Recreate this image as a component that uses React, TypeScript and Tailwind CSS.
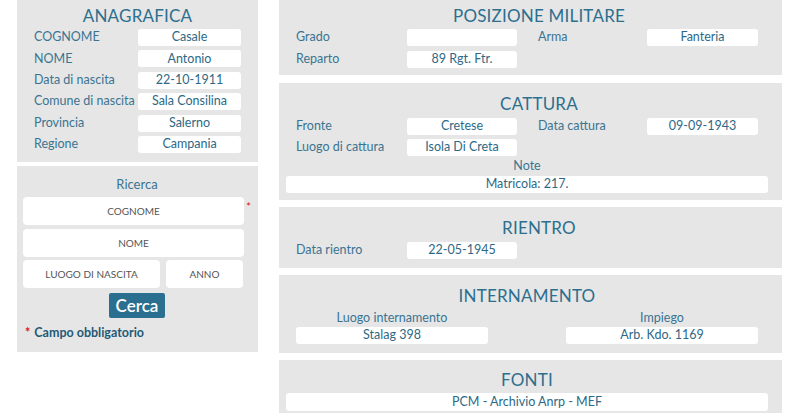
import type { ReactNode } from "react";

const font = { fontFamily: "Lato, 'Open Sans', sans-serif" };

function Title({ children, className = "" }: { children: ReactNode; className?: string }) {
  return (
    <div className={`flex items-center justify-center pt-[1px] text-[17px] leading-none tracking-[0.2px] text-[#2d6f8e] ${className}`}>
      {children}
    </div>
  );
}

function Box({ children, className = "" }: { children?: ReactNode; className?: string }) {
  return (
    <div className={`flex h-[17px] items-center justify-center rounded-[3px] bg-white text-[12.5px] leading-none text-[#2d6986] ${className}`}>
      {children}
    </div>
  );
}

function LeftRow({ label, value }: { label: string; value: string }) {
  return (
    <div className="flex h-[17px] items-center">
      <span className="w-[104px] text-[12.5px] leading-none text-[#3a7492]">{label}</span>
      <Box className="w-[103px]">{value}</Box>
    </div>
  );
}

function RightRow({ l1, v1, l2, v2 }: { l1: string; v1: string; l2?: string; v2?: string }) {
  return (
    <div className="flex h-[17px] items-center">
      <span className="w-[111px] text-[12.5px] leading-none text-[#3a7492]">{l1}</span>
      <Box className="w-[110px]">{v1}</Box>
      {l2 !== undefined && (
        <>
          <span className="ml-[21px] w-[109px] text-[12.5px] leading-none text-[#3a7492]">{l2}</span>
          <Box className="w-[111px]">{v2}</Box>
        </>
      )}
    </div>
  );
}

function SearchInput({ placeholder, className = "" }: { placeholder: string; className?: string }) {
  return (
    <div className={`flex h-[28px] items-center justify-center rounded-[4px] bg-white text-[10px] leading-none text-[#555] ${className}`}>
      {placeholder}
    </div>
  );
}

export default function App() {
  return (
    <div className="flex h-[413px] w-[800px] overflow-hidden bg-white" style={font}>
      <div className="ml-[17px] flex w-[241px] flex-col gap-[4px]">
        <section className="h-[162px] bg-[#e6e6e6] px-[17px] pt-[1px]">
          <Title className="h-[28px]">ANAGRAFICA</Title>
          <div className="flex flex-col gap-[4.4px]">
            <LeftRow label="COGNOME" value="Casale" />
            <LeftRow label="NOME" value="Antonio" />
            <LeftRow label="Data di nascita" value="22-10-1911" />
            <LeftRow label="Comune di nascita" value="Sala Consilina" />
            <LeftRow label="Provincia" value="Salerno" />
            <LeftRow label="Regione" value="Campania" />
          </div>
        </section>

        <section className="h-[186px] bg-[#e6e6e6] pl-[6px] pr-[14px] pt-[6px]">
          <div className="flex h-[25px] items-center justify-center pl-[7px] text-[13px] leading-none text-[#3a7492]">
            Ricerca
          </div>
          <div className="relative">
            <SearchInput placeholder="COGNOME" />
            <span className="absolute right-[-7px] top-[4px] text-[11px] leading-none text-[#e01010]">*</span>
          </div>
          <SearchInput placeholder="NOME" className="mt-[4px]" />
          <div className="mt-[3px] flex gap-[6px]">
            <SearchInput placeholder="LUOGO DI NASCITA" className="w-[137px]" />
            <SearchInput placeholder="ANNO" className="w-[77px]" />
          </div>
          <div className="mt-[5px] flex justify-center pl-[7px]">
            <button className="h-[25px] w-[56px] rounded-[2px] bg-[#2a6f8f] text-[17px] font-semibold leading-none text-white">
              Cerca
            </button>
          </div>
          <div className="mt-[7px] flex h-[16px] items-center gap-[4px] pl-[2px] text-[12.5px] font-bold leading-none text-[#1f5a76]">
            <span className="text-[#e01010]">*</span>
            <span>Campo obbligatorio</span>
          </div>
        </section>
      </div>

      <div className="ml-[21px] flex w-[503px] flex-col gap-[7px]">
        <section className="h-[75px] shrink-0 bg-[#e6e6e6] pl-[17px] pt-[1px]">
          <Title className="h-[28px]">POSIZIONE MILITARE</Title>
          <div className="flex flex-col gap-[5px]">
            <RightRow l1="Grado" v1="" l2="Arma" v2="Fanteria" />
            <RightRow l1="Reparto" v1="89 Rgt. Ftr." />
          </div>
        </section>

        <section className="mt-[1px] h-[117px] shrink-0 bg-[#e6e6e6] pl-[17px] pt-[4px]">
          <Title className="h-[31px]">CATTURA</Title>
          <div className="flex flex-col gap-[4px]">
            <RightRow l1="Fronte" v1="Cretese" l2="Data cattura" v2="09-09-1943" />
            <RightRow l1="Luogo di cattura" v1="Isola Di Creta" />
          </div>
          <div className="-ml-[10px] mr-[14px]">
            <div className="flex h-[20px] items-center justify-center text-[12.5px] leading-none text-[#3a7492]">
              Note
            </div>
            <Box>Matricola: 217.</Box>
          </div>
        </section>

        <section className="h-[61px] shrink-0 bg-[#e6e6e6] pl-[17px] pt-[5px]">
          <Title className="h-[30px]">RIENTRO</Title>
          <RightRow l1="Data rientro" v1="22-05-1945" />
        </section>

        <section className="h-[78px] shrink-0 bg-[#e6e6e6] pl-[17px] pr-[24px] pt-[5px]">
          <Title className="h-[30px]">INTERNAMENTO</Title>
          <div className="grid grid-cols-2 gap-x-[78px]">
            <div className="flex h-[16px] items-center justify-center text-[12.5px] leading-none text-[#3a7492]">
              Luogo internamento
            </div>
            <div className="flex h-[16px] items-center justify-center text-[12.5px] leading-none text-[#3a7492]">
              Impiego
            </div>
            <Box className="mt-[1px]">Stalag 398</Box>
            <Box className="mt-[1px]">Arb. Kdo. 1169</Box>
          </div>
        </section>

        <section className="h-[60px] shrink-0 bg-[#e6e6e6] pl-[7px] pr-[14px] pt-[5px]">
          <Title className="h-[28px]">FONTI</Title>
          <Box className="h-[18px]">PCM - Archivio Anrp - MEF</Box>
        </section>
      </div>
    </div>
  );
}
